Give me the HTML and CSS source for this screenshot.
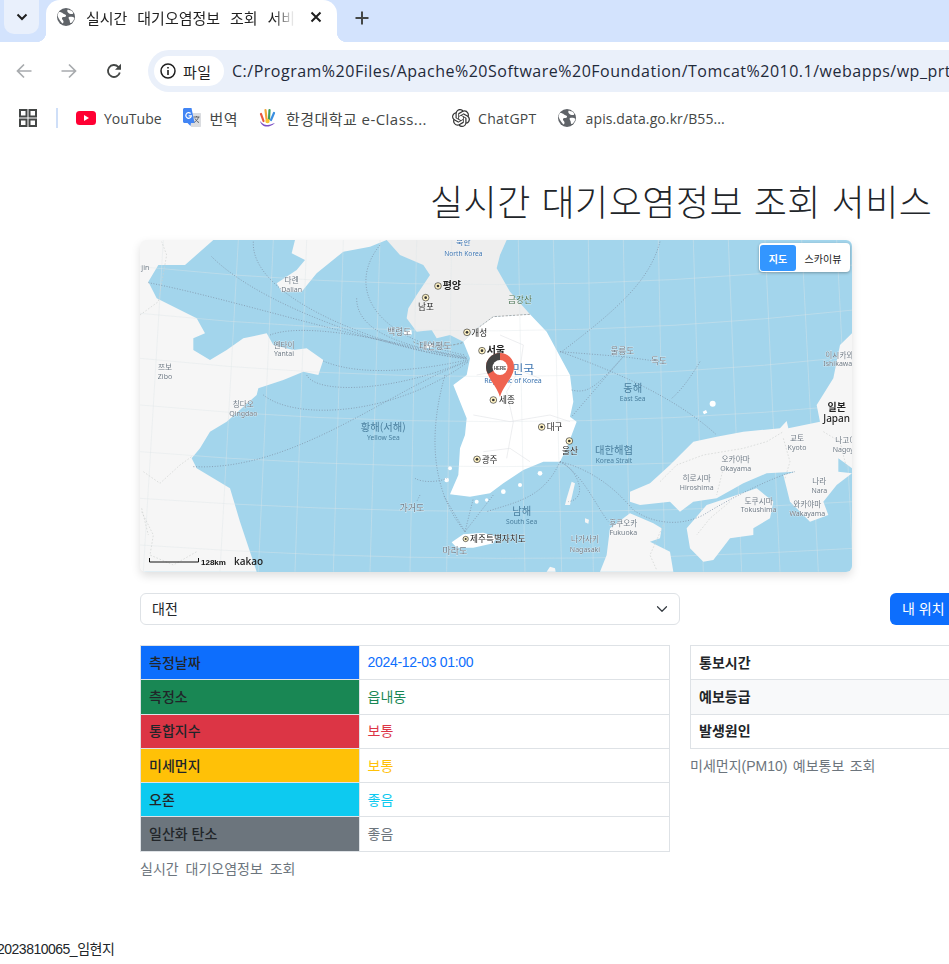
FILE: index.html
```html
<!DOCTYPE html>
<html lang="ko">
<head>
<meta charset="utf-8">
<title>실시간 대기오염정보 조회 서비스</title>
<link rel="stylesheet" href="styles.css">
</head>
<body>
<header class="chrome">
  <div class="tabstrip">
    <div class="tabsearch"><svg width="14" height="14" viewBox="0 0 14 14"><path d="M2.500 4.500 7 9l4.500-4.500" fill="none" stroke="#1f1f1f" stroke-width="2"/></svg></div>
    <div class="tab">
      <svg class="globe" width="18" height="18" viewBox="0 0 18 18"><circle cx="9" cy="9" r="9" fill="#5f6368"/><path d="M2 4c2 0 3 .5 4 1.500s3.500 1 3 2.500-3.500.5-4 2 1.500 2 1.500 3.500S6 16 5 15 2 11 1 9s0-3.500 1-5zM11 1.500c1 1 3 .5 4 1.500s2 3 0 3-3-.5-4-1.500-1-2.500 0-3zM12 9c1.500-.5 4-.5 5 .5s-1.500 5-3 5.500-1-2-1.500-3-1.500-2.500-.5-3z" fill="#fff"/></svg>
      <span class="tabtitle">실시간 대기오염정보 조회 서비스</span>
      <svg class="tabclose" width="12" height="12" viewBox="0 0 12 12"><path d="M1.500 1.500l9 9M10.500 1.500l-9 9" stroke="#1f1f1f" stroke-width="2"/></svg>
    </div>
    <svg class="newtab" width="14" height="14" viewBox="0 0 14 14"><path d="M7 .5v13M.5 7h13" stroke="#444746" stroke-width="2"/></svg>
  </div>
  <div class="toolbar">
    <svg class="navicon" width="16" height="16" viewBox="0 0 16 16"><path d="M15.500 8H1.500M8 1.500 1.500 8 8 14.500" fill="none" stroke="#a8abae" stroke-width="1.700"/></svg>
    <svg class="navicon" width="16" height="16" viewBox="0 0 16 16"><path d="M.5 8h14M8 1.500 14.500 8 8 14.500" fill="none" stroke="#a8abae" stroke-width="1.700"/></svg>
    <svg class="navicon" width="16" height="16" viewBox="0 0 16 16"><path d="M13.800 9.500A6 6 0 1 1 12.300 3.800L14 5.500" fill="none" stroke="#444746" stroke-width="1.800"/><path d="M15 .8v6H9z" fill="#444746"/></svg>
    <div class="omnibox">
      <div class="chip">
        <svg width="16" height="16" viewBox="0 0 16 16"><circle cx="8" cy="8" r="7" fill="none" stroke="#1f1f1f" stroke-width="1.500"/><path d="M8 7v5M8 4v1.600" stroke="#1f1f1f" stroke-width="1.600"/></svg>
        <span>파일</span>
      </div>
      <span class="url">C:/Program%20Files/Apache%20Software%20Foundation/Tomcat%2010.1/webapps/wp_prt</span>
    </div>
  </div>
  <nav class="bookmarks">
    <svg class="apps" width="18" height="18" viewBox="0 0 18 18"><path d="M1 1h6.500v6.500H1zM10.500 1H17v6.500h-6.500zM1 10.500h6.500V17H1zM10.500 10.500H17V17h-6.500z" fill="none" stroke="#444746" stroke-width="2"/></svg>
    <span class="divider"></span>
    <a class="bm"><svg width="20" height="14" viewBox="0 0 20 14"><rect width="20" height="14" rx="3.500" fill="#f03"/><path d="M8 4v6l5-3z" fill="#fff"/></svg>YouTube</a>
    <a class="bm bm-tr"><svg width="20" height="20" viewBox="0 0 20 20"><path d="M7 5h11c.6 0 1 .4 1 1v12c0 .6-.4 1-1 1H9z" fill="#dadce0"/><path d="M11.500 9h6M14.500 8v1M16.500 9c-.5 2-2.500 4.500-4.500 5.500M13 10.500c.7 1.500 2.500 3.500 4 4" fill="none" stroke="#5f6368" stroke-width="1"/><path d="M1 1.500C1 .7 1.700 0 2.500 0H9.500l3 15H9l-.5 3-3-3h-3C1.700 15 1 14.300 1 13.500z" fill="#4285f4"/><path d="M8.600 5.500a2.800 2.800 0 1 0 .8 2.300H6.600" fill="none" stroke="#fff" stroke-width="1.200"/></svg>번역</a>
    <a class="bm bm-hk"><svg width="19" height="20" viewBox="0 0 19 20"><path d="M3 6l2.500 7" stroke="#e8573f" stroke-width="2.200" stroke-linecap="round"/><path d="M7.500 2l1 9" stroke="#f2a53a" stroke-width="2.200" stroke-linecap="round"/><path d="M11.500 2l-.5 9" stroke="#3f9d5a" stroke-width="2.200" stroke-linecap="round"/><path d="M16 5l-3 7" stroke="#3a8fe0" stroke-width="2.200" stroke-linecap="round"/><circle cx="9.500" cy="13" r="2.200" fill="#f6c42f"/><path d="M2 13c1.500 6 8 8 15 2-3 .5-5 2.500-8.500 2S4 15 2 13z" fill="#7a4fc4"/></svg>한경대학교 e-Class...</a>
    <a class="bm bm-gpt"><svg width="18" height="18" viewBox="0 0 24 24"><path fill="#333" d="M22.2819 9.8211a5.9847 5.9847 0 0 0-.5157-4.9108 6.0462 6.0462 0 0 0-6.5098-2.9A6.0651 6.0651 0 0 0 4.9807 4.1818a5.9847 5.9847 0 0 0-3.9977 2.9 6.0462 6.0462 0 0 0 .7427 7.0966 5.98 5.98 0 0 0 .511 4.9107 6.051 6.051 0 0 0 6.5146 2.9001A5.9847 5.9847 0 0 0 13.2599 24a6.0557 6.0557 0 0 0 5.7718-4.2058 5.9894 5.9894 0 0 0 3.9977-2.9001 6.0557 6.0557 0 0 0-.7475-7.0729zm-9.022 12.6081a4.4755 4.4755 0 0 1-2.8764-1.0408l.1419-.0804 4.7783-2.7582a.7948.7948 0 0 0 .3927-.6813v-6.7369l2.02 1.1686a.071.071 0 0 1 .038.052v5.5826a4.504 4.504 0 0 1-4.4945 4.4944zm-9.6607-4.1254a4.4708 4.4708 0 0 1-.5346-3.0137l.142.0852 4.783 2.7582a.7712.7712 0 0 0 .7806 0l5.8428-3.3685v2.3324a.0804.0804 0 0 1-.0332.0615L9.74 19.9502a4.4992 4.4992 0 0 1-6.1408-1.6464zM2.3408 7.8956a4.485 4.485 0 0 1 2.3655-1.9728V11.6a.7664.7664 0 0 0 .3879.6765l5.8144 3.3543-2.0201 1.1685a.0757.0757 0 0 1-.071 0l-4.8303-2.7865A4.504 4.504 0 0 1 2.3408 7.872zm16.5963 3.8558L13.1038 8.364 15.1192 7.2a.0757.0757 0 0 1 .071 0l4.8303 2.7913a4.4944 4.4944 0 0 1-.6765 8.1042v-5.6772a.79.79 0 0 0-.407-.667zm2.0107-3.0231l-.142-.0852-4.7735-2.7818a.7759.7759 0 0 0-.7854 0L9.409 9.2297V6.8974a.0662.0662 0 0 1 .0284-.0615l4.8303-2.7866a4.4992 4.4992 0 0 1 6.6802 4.66zM8.3065 12.863l-2.02-1.1638a.0804.0804 0 0 1-.038-.0567V6.0742a4.4992 4.4992 0 0 1 7.3757-3.4537l-.142.0805L8.704 5.459a.7948.7948 0 0 0-.3927.6813zm1.0976-2.3654l2.602-1.4998 2.6069 1.4998v2.9994l-2.5974 1.4997-2.6067-1.4997Z"/></svg>ChatGPT</a>
    <a class="bm bm-api"><svg width="18" height="18" viewBox="0 0 18 18"><circle cx="9" cy="9" r="9" fill="#5f6368"/><path d="M2 4c2 0 3 .5 4 1.500s3.500 1 3 2.500-3.500.5-4 2 1.500 2 1.500 3.500S6 16 5 15 2 11 1 9s0-3.500 1-5zM11 1.500c1 1 3 .5 4 1.500s2 3 0 3-3-.5-4-1.500-1-2.500 0-3zM12 9c1.500-.5 4-.5 5 .5s-1.500 5-3 5.500-1-2-1.500-3-1.500-2.500-.5-3z" fill="#fff"/></svg>apis.data.go.kr/B55...</a>
  </nav>
</header>

<main class="page">
  <h1 class="title">실시간 대기오염정보 조회 서비스</h1>

  <div class="map">
    <svg class="mapsvg" width="712" height="332" viewBox="0 0 712 332" xmlns="http://www.w3.org/2000/svg">
      <rect class="sea" width="712" height="332"/>
      <g transform="translate(-10 -5) scale(.33333)">
        <path class="land" d="M30 15H250L165 90 85 90 55 140 80 190 200 250 225 295 190 310 190 345 240 375 290 345 340 310 410 295 430 330 490 345 530 340 580 375 565 420 520 410 460 435 385 460 380 480 290 560 240 590 210 640 185 670 200 700 300 760 330 860 380 1010H30Z"/>
        <path class="land" d="M495 15 485 55 525 75 500 105 440 145 455 170 515 170 560 115 640 50 720 35 770 15Z"/>
        <path class="nk" d="M770 15 810 60 880 90 900 120 860 180 835 220 830 250 860 290 905 285 920 310 960 300 1000 320 1040 280 1090 245 1200 238 1140 170 1100 100 1110 60 1130 15Z"/>
        <path class="kor" d="M1040 280 1090 245 1200 238 1250 290 1320 420 1330 500 1320 545 1340 560 1310 640 1290 680 1240 680 1180 705 1120 745 1080 775 1020 785 960 778 985 720 990 640 1005 600 1010 550 970 450 1010 420 1020 370 1000 320Z"/>
        <path class="kor" d="M965 922 1000 898 1060 893 1100 905 1090 925 1030 938 980 938Z"/>
        <circle class="kor" cx="960" cy="700" r="6"/><circle class="kor" cx="950" cy="735" r="7"/><circle class="kor" cx="975" cy="770" r="8"/><circle class="kor" cx="1040" cy="800" r="6"/><circle class="kor" cx="1070" cy="795" r="5"/><circle class="kor" cx="1120" cy="770" r="7"/><circle class="kor" cx="1170" cy="750" r="6"/><circle class="kor" cx="1230" cy="715" r="7"/>
        <path class="kor" d="M820 290l24-6 2 14-22 2zM880 330l30-4 4 10-30 4z"/>
        <path class="land" d="M458 150h30v18h-30z"/>
        <path class="grid" d="M30 95Q1100 205 2170 90M30 235Q1100 345 2170 225M30 370Q1100 482 2170 365M30 510Q1100 610 2170 510M30 650Q1100 740 2170 650M30 790Q1100 865 2170 800M30 930Q1100 1005 2170 940M100 15 40 1010M325 15 270 1010M430 15 385 1010M530 15 495 1010M640 15 610 1010M750 15 720 1010M860 15 840 1010M965 15 950 1010M1165 15 1185 1010M1270 15 1295 1010M1375 15 1390 1010M1480 15 1500 1010M1585 15 1605 1010M1690 15 1720 1010M1795 15 1835 1010M1905 15 1950 1010M2015 15 2065 1010M2120 15 2170 1010"/>
        <path class="border" d="M30 240 85 200 110 60 95 20M40 710 90 745 150 690 185 665M35 830 70 900 60 960 130 990 200 950M35 820 55 900"/>
        <path class="dmz" d="M850 320C870 335 950 340 1000 322M1040 282 1090 245 1200 238"/>
        <path class="prov" d="M1040 420 1150 400 1230 430M1030 540 1140 560 1260 540 1320 560M1060 650 1140 640 1200 680M1110 300 1180 330 1170 400 1130 470 1150 560 1130 670"/>
        <path class="routes" d="M55 143C300 190 700 320 1010 368M245 65C400 220 800 350 1010 370M370 20C360 200 800 350 1010 372M680 190C680 300 850 340 1010 365M750 30C660 140 700 300 1005 360M420 300C550 250 900 350 1010 370M580 378C700 430 900 400 1010 375M530 420C560 480 800 470 1015 375M400 480C500 560 800 540 1015 380M190 695C500 710 800 450 1015 380M945 420C880 650 930 800 1005 890M855 730C880 745 930 740 950 730M870 780 860 800M1005 890 940 780M1005 890 1030 790M1005 890 1090 780"/>
      </g>
      <g transform="translate(350 -5) scale(.33333)">
        <path class="land" d="M420 770 480 745 540 690 610 620 680 605 760 590 870 580 890 558 895 580 990 560 980 510 1030 430 1050 330 1086 295V700L1045 670 1045 710 1086 715 1040 750 1000 800 1015 840 960 860 900 800 890 760 880 720 915 710 830 715 760 745 680 790 610 800 570 830 540 800 450 810 420 800Z"/>
        <path class="land" d="M590 880 650 810 740 780 800 760 850 800 840 850 790 880 790 900 720 910 670 975 640 980 600 940Z"/>
        <path class="land" d="M330 1010 350 960 360 880 420 835 490 865 515 880 510 910 480 920 540 950 550 1010Z"/>
        <path class="land" d="M170 1010 180 995 195 1000 197 1010ZM230 790 245 740 255 745 240 810 225 810ZM285 850l12 4-2 12-10-4z"/>
        <circle class="kor" cx="668" cy="506" r="9"/>
        <path class="kor" d="M638 530l10-5 4 8-10 5z"/>
        <path class="border" d="M510 740 560 690 640 660 760 640 830 620 880 590M880 610 900 680 885 730M700 700 680 780M1000 590 1050 620 1070 700M720 800 660 850 620 900M520 870 480 960 500 1005"/>
        <path class="routes" d="M510 20C480 130 400 210 215 350M210 350 400 365 510 380M210 350C350 400 550 480 680 600M630 380C600 430 570 470 545 490M400 365C330 440 300 480 245 465M400 365 245 545M210 680C260 700 300 790 235 800M210 680C280 720 310 800 355 860M210 680C330 710 400 790 430 825C480 860 560 880 640 840 720 790 860 720 915 710M210 680C160 790 80 800-10 830"/>
      </g>
      <g transform="translate(-10 -5) scale(.33333)">
        <text class="lb ko f22 blue" x="1000" y="30" text-anchor="middle">북한</text>
        <text class="lb en f20 blue" x="1000" y="62" text-anchor="middle">North Korea</text>
        <text class="lb ko f21 grey" x="485" y="143" text-anchor="middle">다롄</text>
        <text class="lb en f21 grey" x="485" y="170" text-anchor="middle">Dalian</text>
        <text class="lb ko f28 dark" x="938" y="163">평양</text>
        <text class="lb ko f24 dark" x="888" y="225" text-anchor="middle">남포</text>
        <text class="lb ko f24 grey" x="772" y="300">백령도</text>
        <text class="lb ko f24 grey" x="868" y="342">대연평도</text>
        <text class="lb ko f24 dark" x="1024" y="302">개성</text>
        <text class="lb ko f28 dark" x="1070" y="356">서울</text>
        <text class="lb ko f21 grey" x="462" y="340" text-anchor="middle">옌타이</text>
        <text class="lb en f21 grey" x="462" y="364" text-anchor="middle">Yantai</text>
        <text class="lb ko f21 grey" x="105" y="404" text-anchor="middle">쯔보</text>
        <text class="lb en f21 grey" x="105" y="431" text-anchor="middle">Zibo</text>
        <text class="lb ko f21 grey" x="340" y="515" text-anchor="middle">칭다오</text>
        <text class="lb en f21 grey" x="340" y="543" text-anchor="middle">Qingdao</text>
        <text class="lb ko f30 sea2" x="760" y="588" text-anchor="middle">황해(서해)</text>
        <text class="lb en f20 sea2" x="760" y="614" text-anchor="middle">Yellow Sea</text>
        <text class="lb ko f24 dark" x="1055" y="683">광주</text>
        <text class="lb ko f25 grey" x="846" y="829" text-anchor="middle">가거도</text>
        <text class="lb ko f24 dark" x="1020" y="922">제주특별자치도</text>
        <text class="lb ko f25 grey" x="975" y="958" text-anchor="middle">마라도</text>
        <text class="lb en f21 grey" x="34" y="105">jin</text>
        <circle class="cityo" cx="924" cy="153" r="10"/><circle class="cityi" cx="924" cy="153" r="4"/>
        <circle class="cityo" cx="887" cy="188" r="10"/><circle class="cityi" cx="887" cy="188" r="4"/>
        <circle class="cityo" cx="1011" cy="292" r="10"/><circle class="cityi" cx="1011" cy="292" r="4"/>
        <circle class="cityo" cx="1056" cy="347" r="10"/><circle class="cityi" cx="1056" cy="347" r="4"/>
        <circle class="cityo" cx="1041" cy="673" r="10"/><circle class="cityi" cx="1041" cy="673" r="4"/>
        <circle class="cityo" cx="1007" cy="912" r="8"/><circle class="cityi" cx="1007" cy="912" r="3"/>
      </g>
      <g transform="translate(350 -5) scale(.33333)">
        <text class="lb ko f24 green" x="90" y="205" text-anchor="middle">금강산</text>
        <text class="lb ko f34 blue" x="100" y="418" text-anchor="middle">민국</text>
        <text class="lb en f21 blue" x="69" y="444" text-anchor="middle">Republic of Korea</text>
        <text class="lb ko f24 dark" x="27" y="505">세종</text>
        <text class="lb ko f24 dark" x="170" y="585">대구</text>
        <text class="lb ko f24 dark" x="240" y="657" text-anchor="middle">울산</text>
        <text class="lb ko f24 grey" x="397" y="357" text-anchor="middle">울릉도</text>
        <text class="lb ko f24 grey" x="507" y="387" text-anchor="middle">독도</text>
        <text class="lb ko f30 sea2" x="428" y="471" text-anchor="middle">동해</text>
        <text class="lb en f20 sea2" x="428" y="498" text-anchor="middle">East Sea</text>
        <text class="lb ko f30 sea2" x="372" y="658" text-anchor="middle">대한해협</text>
        <text class="lb en f20 sea2" x="372" y="684" text-anchor="middle">Korea Strait</text>
        <text class="lb ko f30 sea2" x="95" y="841" text-anchor="middle">남해</text>
        <text class="lb en f20 sea2" x="95" y="868" text-anchor="middle">South Sea</text>
        <text class="lb ko f21 grey" x="400" y="874" text-anchor="middle">후쿠오카</text>
        <text class="lb en f21 grey" x="400" y="900" text-anchor="middle">Fukuoka</text>
        <text class="lb ko f21 grey" x="285" y="922" text-anchor="middle">나가사키</text>
        <text class="lb en f21 grey" x="285" y="950" text-anchor="middle">Nagasaki</text>
        <text class="lb ko f21 grey" x="620" y="737" text-anchor="middle">히로시마</text>
        <text class="lb en f21 grey" x="620" y="764" text-anchor="middle">Hiroshima</text>
        <text class="lb ko f21 grey" x="737" y="682" text-anchor="middle">오카야마</text>
        <text class="lb en f21 grey" x="737" y="708" text-anchor="middle">Okayama</text>
        <text class="lb ko f21 grey" x="806" y="806" text-anchor="middle">도쿠시마</text>
        <text class="lb en f21 grey" x="806" y="832" text-anchor="middle">Tokushima</text>
        <text class="lb ko f21 grey" x="952" y="817" text-anchor="middle">와카야마</text>
        <text class="lb en f21 grey" x="952" y="842" text-anchor="middle">Wakayama</text>
        <text class="lb ko f21 grey" x="921" y="618" text-anchor="middle">교토</text>
        <text class="lb en f21 grey" x="921" y="644" text-anchor="middle">Kyoto</text>
        <text class="lb ko f21 grey" x="988" y="748" text-anchor="middle">나라</text>
        <text class="lb en f21 grey" x="988" y="774" text-anchor="middle">Nara</text>
        <text class="lb ko f21 grey" x="1036" y="624">나고야</text>
        <text class="lb en f21 grey" x="1028" y="650">Nagoya</text>
        <text class="lb ko f21 grey" x="1006" y="368">이시카와</text>
        <text class="lb en f21 grey" x="1000" y="394">Ishikawa</text>
        <text class="lb ko f28 dark" x="1040" y="528" text-anchor="middle">일본</text>
        <text class="lb en f26 dark" x="1040" y="561" text-anchor="middle">Japan</text>
        <circle class="cityo" cx="10" cy="495" r="10"/><circle class="cityi" cx="10" cy="495" r="4"/>
        <circle class="cityo" cx="155" cy="576" r="10"/><circle class="cityi" cx="155" cy="576" r="4"/>
        <circle class="cityo" cx="238" cy="618" r="10"/><circle class="cityi" cx="238" cy="618" r="4"/>
      </g>
      <path class="scalebar" d="M9.500 318V322H58.500V318"/>
      <text class="scale" x="61" y="325">128km</text>
      <text class="kakao" x="94" y="325">kakao</text>
    </svg>
    <div class="maptype">
      <span class="maptype-on">지도</span>
      <span class="maptype-off">스카이뷰</span>
    </div>
    <svg class="pin" width="28" height="46" viewBox="0 0 28 46" xmlns="http://www.w3.org/2000/svg">
      <path d="M14 1A14 14 0 0 1 28 15C28 25 17 34 14 45 11 34 0 25 0 15A14 14 0 0 1 14 1Z" fill="#ef6350"/>
      <path d="M14 1A14 14 0 0 0 0 15C0 18 1 20 2 22L14 15Z" fill="#444"/>
      <circle cx="14" cy="15.500" r="7.500" fill="#fff"/>
      <text class="pintext" x="14" y="17.500" text-anchor="middle">HERE</text>
    </svg>
  </div>

  <div class="controls">
    <div class="select">
      <span>대전</span>
      <svg width="12" height="12" viewBox="0 0 16 16"><path d="M2 5l6 6 6-6" fill="none" stroke="#343a40" stroke-width="1.600" stroke-linecap="round" stroke-linejoin="round"/></svg>
    </div>
    <button class="locbtn" type="button">내 위치</button>
  </div>

  <div class="tables">
    <section class="col-left">
      <table class="data">
        <tr><th class="bg-blue">측정날짜</th><td class="tx-blue">2024-12-03 01:00</td></tr>
        <tr><th class="bg-green">측정소</th><td class="tx-green">읍내동</td></tr>
        <tr><th class="bg-red">통합지수</th><td class="tx-red">보통</td></tr>
        <tr><th class="bg-yellow">미세먼지</th><td class="tx-yellow">보통</td></tr>
        <tr><th class="bg-cyan">오존</th><td class="tx-cyan">좋음</td></tr>
        <tr><th class="bg-grey">일산화 탄소</th><td class="tx-grey">좋음</td></tr>
      </table>
      <p class="caption caption-left">실시간 대기오염정보 조회</p>
    </section>
    <section class="col-right">
      <table class="data side">
        <tr><th>통보시간</th><td></td></tr>
        <tr class="striped"><th>예보등급</th><td></td></tr>
        <tr><th>발생원인</th><td></td></tr>
      </table>
      <p class="caption caption-right">미세먼지(PM10) 예보통보 조회</p>
    </section>
  </div>
</main>
<footer class="foot">2023810065_임현지</footer>
</body>
</html>
```
FILE: styles.css
```css
* { box-sizing: border-box; }
html, body { margin: 0; padding: 0; width: 949px; height: 964px; overflow: hidden; background: #fff; }
body { font-family: "Liberation Sans", "Noto Sans CJK KR", sans-serif; color: #212529; position: relative; }
.chrome { font-family: "Open Sans", "Noto Sans CJK KR", sans-serif; }
.tabstrip { height: 42px; background: #d3e3fd; display: flex; align-items: flex-start; position: relative; }
.tabsearch { width: 35px; height: 34px; margin: 0 0 0 4px; background: #e9f0fc; border-radius: 0 0 10px 10px; display: flex; align-items: center; justify-content: center; flex: none; }
.tab { position: relative; width: 291px; height: 42px; margin-left: 7px; background: #fff; border-radius: 14px 14px 0 0; display: flex; align-items: center; padding: 0 0 8px 11px; flex: none; }
.tab::before, .tab::after { content: ""; position: absolute; bottom: 0; width: 10px; height: 10px; }
.tab::before { left: -10px; background: radial-gradient(circle at 0 0, transparent 10px, #fff 10.500px); }
.tab::after { right: -10px; background: radial-gradient(circle at 100% 0, transparent 10px, #fff 10.500px); }
.globe { flex: none; }
.tabtitle { flex: none; font-size: 15px; word-spacing: 6px; margin-left: 11px; width: 209px; white-space: nowrap; overflow: hidden; color: #1f1f1f; -webkit-mask-image: linear-gradient(90deg, #000 90%, transparent); mask-image: linear-gradient(90deg, #000 90%, transparent); }
.tabclose { margin-left: 15px; flex: none; }
.newtab { margin: 11px 0 0 18px; flex: none; }
.toolbar { height: 58px; display: flex; align-items: center; padding: 0 0 0 16px; gap: 29px; }
.navicon { flex: none; }
.omnibox { flex: 1; min-width: 0; height: 42px; margin-left: -3px; border-radius: 21px 0 0 21px; background: #eaf0fa; display: flex; align-items: center; padding-left: 6px; overflow: hidden; }
.chip { height: 30px; width: 70px; background: #fff; border-radius: 15px; display: flex; align-items: center; gap: 7px; padding: 0 0 0 6px; font-size: 15px; letter-spacing: .5px; color: #1f1f1f; flex: none; }
.url { font-size: 16px; margin-left: 8px; white-space: nowrap; color: #1f2a3a; letter-spacing: .5px; }
.bookmarks { height: 36px; display: flex; align-items: center; padding: 0 0 0 19px; font-size: 14px; color: #444746; white-space: nowrap; }
.apps { flex: none; }
.divider { width: 2px; height: 20px; background: #cfdff8; margin: 0 18px 0 19px; }
.bm { display: inline-flex; align-items: center; gap: 8px; }
.bm-tr { margin-left: 20px; gap: 8px; font-size: 15px; letter-spacing: .4px; }
.bm-hk { margin-left: 20px; gap: 9px; font-size: 15px; letter-spacing: .45px; }
.bm-gpt { margin-left: 25px; gap: 8px; letter-spacing: .3px; }
.bm-api { margin-left: 21px; gap: 10px; letter-spacing: .1px; }

.page { padding-left: 140px; width: 949px; }
.title { margin: 0; padding: 43px 0 0 290px; height: 104px; font-size: 36px; font-weight: 300; line-height: 43px; letter-spacing: .5px; color: #212529; white-space: nowrap; font-family: "Noto Sans CJK KR", "Liberation Sans", sans-serif; }

.map { position: relative; width: 712px; height: 332px; border-radius: 6px; overflow: hidden; box-shadow: 0 4px 10px rgba(0,0,0,.13); }
.mapsvg { display: block; filter: blur(.4px); }
.sea { fill: #a3d5ec; }
.land { fill: #f6f6f6; }
.nk { fill: #eeeeee; }
.kor { fill: #fff; }
.grid { fill: none; stroke: #dfe5e8; stroke-opacity: .4; stroke-width: 3; }
.border { fill: none; stroke: #cfd2d0; stroke-width: 2; stroke-dasharray: 5 5; }
.dmz { fill: none; stroke: #888; stroke-width: 2; stroke-dasharray: 7 4; }
.prov { fill: none; stroke: #e4e6e8; stroke-width: 2; }
.routes { fill: none; stroke: #7f93a8; stroke-width: 2.400; stroke-dasharray: 3 5; }
.lb { font-family: "Noto Sans CJK KR", sans-serif; paint-order: stroke; stroke: rgba(255,255,255,.7); stroke-width: 2; }
.en { font-family: "Noto Sans", sans-serif; }
.f20 { font-size: 20px; } .f21 { font-size: 21px; } .f22 { font-size: 22px; }
.en.f26 { font-size: 30px; font-weight: 500; }
.ko.f21 { font-size: 23px; } .ko.f22 { font-size: 24px; } .ko.f24 { font-size: 26px; } .ko.f25 { font-size: 27px; } .ko.f28 { font-size: 30px; font-weight: 700; } .ko.f30 { font-size: 31px; } .ko.f34 { font-size: 36px; }
.grey { fill: #6f7a85; }
.dark { fill: #222; }
.blue { fill: #3c74b0; }
.green { fill: #3f6a4a; }
.lb.sea2 { fill: #4a7f9e; stroke: none; }
.cityo { fill: #fff3c4; stroke: #333; stroke-width: 2; }
.cityi { fill: #333; }
.scalebar { fill: none; stroke: #111; stroke-width: 1; }
.scale { font-family: "Liberation Sans", sans-serif; font-size: 8px; font-weight: 700; fill: #111; }
.kakao { font-family: "Open Sans", sans-serif; font-size: 10px; font-weight: 600; fill: #222; }
.maptype { position: absolute; top: 3px; right: 2px; width: 91px; height: 29px; background: #fff; border-radius: 4px; display: flex; padding: 2px 0 1px 1px; font-family: "Noto Sans CJK KR", sans-serif; font-size: 10px; box-shadow: 0 1px 3px rgba(0,0,0,.3); align-items: stretch; }
.maptype-on { width: 36px; background: #3396ff; color: #fff; border-radius: 3px; display: flex; align-items: center; justify-content: center; font-weight: 700; }
.maptype-off { flex: 1; color: #222; display: flex; align-items: center; justify-content: center; }
.pin { position: absolute; left: 346px; top: 112px; filter: blur(.25px); }
.pintext { font-family: "Liberation Sans", sans-serif; font-size: 4.500px; font-weight: 700; fill: #444; }

.controls { display: flex; align-items: flex-start; margin-top: 21px; height: 32px; gap: 210px; }
.select { width: 540px; height: 32px; border: 1px solid #dee2e6; border-radius: 6px; display: flex; align-items: center; justify-content: space-between; padding: 0 11px 2px 11px; font-size: 14px; background: #fff; flex: none; }
.select svg { margin-top: 2px; }
.locbtn { flex: none; width: 70px; height: 32px; background: #0d6efd; color: #fff; border: 0; border-radius: 6px 0 0 6px; padding: 0 0 2px 12px; font-size: 14px; text-align: left; font-family: inherit; white-space: nowrap; }

.tables { display: flex; align-items: flex-start; margin-top: 20px; gap: 20px; }
.col-left { width: 530px; flex: none; }
.col-right { width: 400px; flex: none; }
.data { width: 100%; border-collapse: collapse; table-layout: fixed; font-size: 14px; border: 1px solid #dee2e6; }
.data th, .data td { border: 1px solid #dee2e6; padding: 0 8px 2px; height: 34.300px; text-align: left; }
.data td { padding-left: 7.500px; }
.data td.tx-blue { letter-spacing: -.3px; }
.data th { width: 219px; font-weight: 500; color: #212529; }
.side th { width: 330px; font-weight: 700; }
.striped th, .striped td { background: #f8f9fa; }
.bg-blue { background: #0d6efd; }
.bg-green { background: #198754; }
.bg-red { background: #dc3545; }
.bg-yellow { background: #ffc107; }
.bg-cyan { background: #0dcaf0; }
.bg-grey { background: #6c757d; }
.tx-blue { color: #0d6efd; }
.tx-green { color: #198754; }
.tx-red { color: #dc3545; }
.tx-yellow { color: #ffc107; }
.tx-cyan { color: #0dcaf0; }
.tx-grey { color: #6c757d; }
.caption { margin: 9px 0 0; font-size: 14px; line-height: 17px; color: #6c757d; white-space: nowrap; }
.caption-left { word-spacing: 3px; }
.caption-right { word-spacing: 1.500px; }
.foot { position: absolute; left: -3px; top: 941px; font-size: 14px; line-height: 16px; letter-spacing: -.5px; color: #212529; white-space: nowrap; }
```
